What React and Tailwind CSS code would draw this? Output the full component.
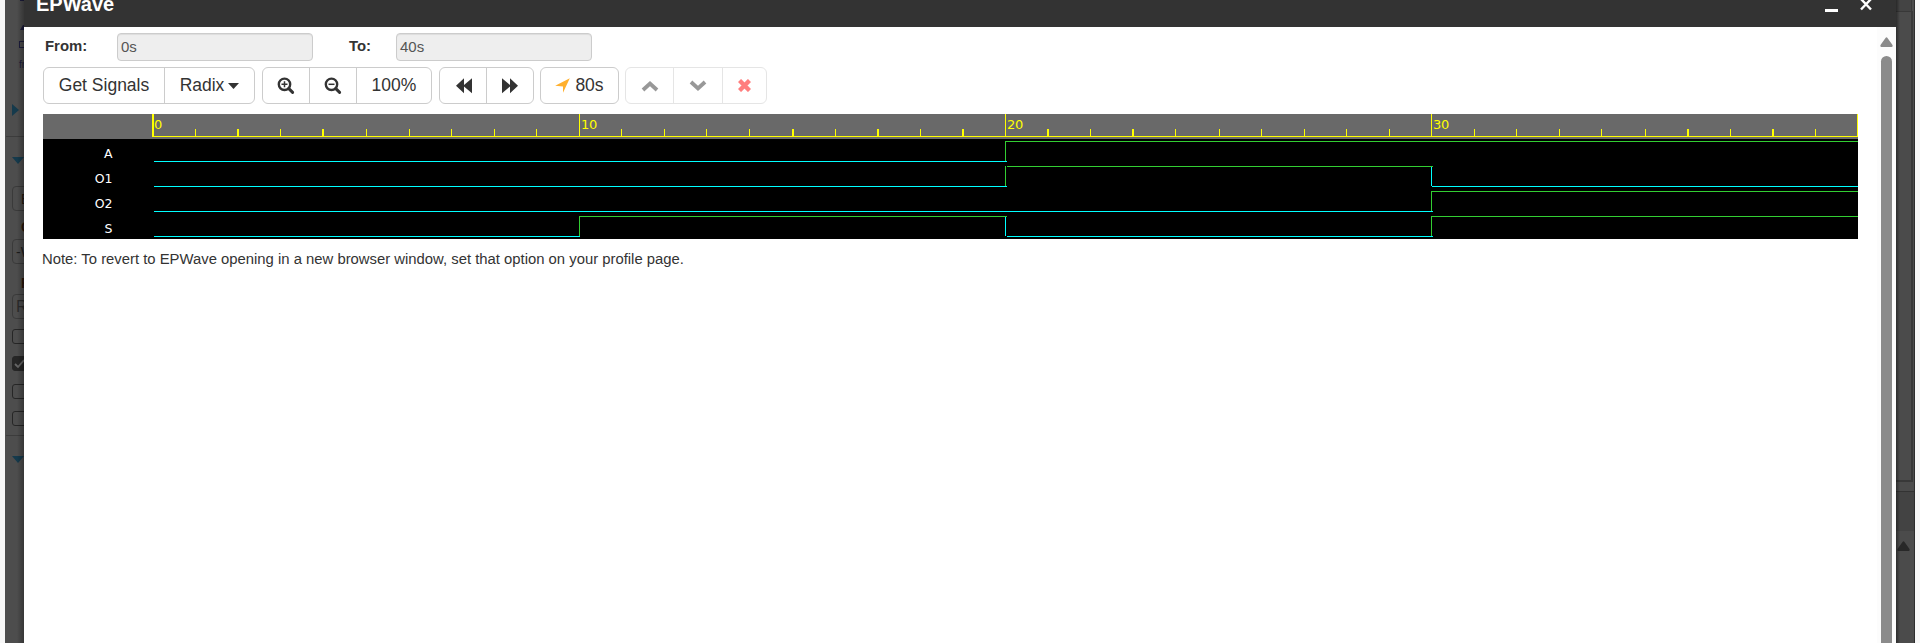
import React from 'react';

function Magnifier({ plus }) {
  return (
    <svg width="18" height="18" viewBox="0 0 18 18" fill="none" stroke="#333">
      <circle cx="7.500" cy="7.300" r="5.700" strokeWidth="2.400" />
      <path d="M11.800 11.600L15.600 15.400" strokeWidth="3" strokeLinecap="round" />
      <path d={plus ? 'M4.500 7.300H10.500M7.500 4.300V10.300' : 'M4.500 7.300H10.500'} strokeWidth="1.500" />
    </svg>
  );
}

const btn = 'flex h-full items-center justify-center border-r border-[#ccc] last:border-r-0';

function Group({ className = '', children }) {
  return <div className={'flex h-[37px] shrink-0 rounded-[6px] border border-[#ccc] bg-white ' + className}>{children}</div>;
}

function Field({ value }) {
  return (
    <div className="flex h-7 w-[196px] items-center rounded-[4px] border border-[#ccc] bg-[#eee] pl-[3px] text-[15px] text-[#555] shadow-[inset_0_1px_1px_rgba(0,0,0,0.075)]">
      {value}
    </div>
  );
}

// Ruler ticks as [x, width]; every tenth one is drawn separately as a major line.
const MINOR = [
  [152, 1], [194, 2], [237, 1], [279, 2], [323, 1], [366, 1], [408, 1], [451, 1], [493, 1],
  [578, 1], [621, 1], [663, 1], [706, 1], [749, 2], [792, 1], [834, 2], [877, 1], [919, 2],
  [1004, 2], [1047, 1], [1089, 2], [1132, 1], [1176, 1], [1218, 1], [1261, 1], [1303, 1], [1346, 1],
  [1431, 1], [1473, 1], [1516, 1], [1558, 1], [1602, 1], [1644, 2], [1687, 1], [1729, 2], [1772, 1],
];
const MAJOR = [
  ['0', 111], ['10', 538], ['20', 964], ['30', 1390],
];

function Wave() {
  const g = '#32cd32';
  const c = '#00ffff';
  return (
    <svg width="1815" height="125" className="mt-[10px] block shrink-0" shapeRendering="crispEdges">
      <rect width="1815" height="25" fill="#696969" />
      <rect y="25" width="1815" height="100" fill="#000" />
      <rect x="109" y="22" width="1706" height="1" fill="#ff0" />
      {MINOR.map(([x, w]) => (
        <rect key={x} x={x} y="15" width={w} height="7" fill="#ff0" />
      ))}
      <rect x="109" y="0" width="2" height="22" fill="#ff0" />
      {[536, 962, 1388, 1814].map((x) => (
        <rect key={x} x={x} y="0" width="1" height="22" fill="#ff0" />
      ))}
      <g fill="#ff0" fontFamily="DejaVu Sans, sans-serif" fontSize="13" letterSpacing="-0.2">
        {MAJOR.map(([m, x]) => (
          <text key={m} x={x} y="15">{m}</text>
        ))}
      </g>
      <g fill="#fff" fontFamily="DejaVu Sans, sans-serif" fontSize="12.500" textAnchor="end">
        {['A', 'O1', 'O2', 'S'].map((m, i) => (
          <text key={m} x="69.500" y={44 + i * 25}>{m}</text>
        ))}
      </g>
      <g fill="none" strokeWidth="1">
        <path stroke={c} d="M111 47.500H964M111 72.500H964M111 97.500H1390M111 122.500H537M962.500 102V122M964 122.500H1390M1388.500 52V72M1389 72.500H1815" />
        <path stroke={g} d="M962.500 47V27.500H1815M962.500 72V52M964 52.500H1390M1388.500 97V77.500H1815M536.500 122V102.500H964M1388.500 122V102.500H1815" />
      </g>
    </svg>
  );
}

function Check({ className, checked }) {
  return (
    <div className={'ml-[7px] h-[15px] w-[15px] shrink-0 rounded-[3px] border border-[#262626] ' + className + (checked ? ' bg-[#262626]' : '')}>
      {checked && (
        <svg width="13" height="13" viewBox="0 0 13 13" fill="none" stroke="#666" strokeWidth="1.800"><path d="M2 7l3 3 6-7" /></svg>
      )}
    </div>
  );
}

const box = 'ml-[7px] flex h-[25px] w-10 shrink-0 items-center rounded-[4px] border border-[#3a3a3a] ';

function LeftStrip() {
  return (
    <div className="relative flex w-[19px] shrink-0 flex-col overflow-hidden bg-[#4d4d4d] text-[14px] leading-none">
      <div className="ml-[15px] h-px w-1 shrink-0 bg-[#1c1c3c]" />
      <svg className="mt-6 ml-[15px] shrink-0" width="8" height="5"><path d="M0 5L3 0H8V5Z" fill="#1c1c3c" /></svg>
      <div className="mt-[11px] ml-[14px] h-[7px] w-[10px] shrink-0 border border-[#1c1c3c]" />
      <div className="mt-[12px] ml-[14px] h-[10px] shrink-0 text-[10px] text-[#1c1c3c]">fr</div>
      <svg className="mt-[34px] ml-[7px] shrink-0" width="7" height="12"><path d="M0 0L7 6L0 12Z" fill="#153a4c" /></svg>
      <div className="mt-5 ml-px h-px shrink-0 bg-[#3c3c3c]" />
      <svg className="mt-5 ml-[7px] shrink-0" width="12" height="7"><path d="M0 0H12L6 7Z" fill="#153a4c" /></svg>
      <div className={box + 'mt-[22px] pl-2 text-[#24170f]'}>E</div>
      <div className="mt-[9px] ml-4 h-[14px] shrink-0 font-bold text-[#2a170a]">C</div>
      <div className={box + 'mt-[5px] pl-[3px] text-[#1c1c1c]'}>-W</div>
      <div className="mt-[12px] ml-4 h-[14px] shrink-0 font-bold text-[#2a170a]">R</div>
      <div className={box + 'mt-[4px] pl-[3px] text-[16px] text-[#2b2b2b]'}>R</div>
      <Check className="mt-[10px]" />
      <Check className="mt-[12px]" checked />
      <Check className="mt-[13px]" />
      <Check className="mt-[12px]" />
      <div className="mt-[9px] ml-px h-px shrink-0 bg-[#3c3c3c]" />
      <svg className="mt-5 ml-[7px] shrink-0" width="12" height="7"><path d="M0 0H12L6 7Z" fill="#153a4c" /></svg>
      <div className="absolute inset-y-0 right-0 w-[7px] bg-gradient-to-r from-transparent to-black/30" />
    </div>
  );
}

function RightStrip() {
  return (
    <div className="relative flex w-[19px] shrink-0 flex-col bg-[#4b4b4b]">
      <div className="h-[11px] w-4 shrink-0 border-r border-[#383838] bg-[#444]" />
      <div className="h-[471px] w-[17px] shrink-0 border-t border-r-2 border-b-2 border-[#383838]" />
      <div className="mt-[9px] h-px shrink-0 bg-[#333]" />
      <div className="h-[39px] shrink-0 bg-[#434343]" />
      <svg className="mt-[10px] ml-px shrink-0" width="13" height="10"><path d="M5.500 1Q6.500 -.5 7.500 1L12.500 8Q13 10 11.500 10H1.500Q0 10 .5 8Z" fill="#282828" /></svg>
      <div className="absolute inset-y-0 right-0 w-px bg-[#2e2e2e]" />
      <div className="absolute inset-y-0 left-0 w-[4px] bg-gradient-to-l from-transparent to-black/40" />
    </div>
  );
}

export default function App() {
  return (
    <div className="flex h-[643px] w-[1920px] overflow-hidden bg-[#f7f7f7] font-['Liberation_Sans',Arial,sans-serif] text-[#333]">
      <div className="w-[5px] shrink-0" />
      <LeftStrip />
      <div className="flex w-[1872px] shrink-0 flex-col bg-white">
        <header className="flex h-[27px] shrink-0 items-start justify-between bg-[#333] pr-[24px] pl-[12px] text-white">
          <h1 className="-mt-[9px] text-[20px] leading-[26px] font-bold">EPWave</h1>
          <div className="flex gap-[22px]">
            <div className="mt-[9px] h-[3px] w-[13px] bg-white" />
            <svg width="12" height="11" viewBox="0 0 12 11" stroke="#fff" strokeWidth="2.400"><path d="M1 -1L11 9.500M11 -1L1 9.500" /></svg>
          </div>
        </header>
        <div className="flex min-h-0 flex-1 justify-between">
          <main className="flex flex-col pl-[19px]">
            <div className="mt-[6px] flex h-7 shrink-0 pl-[2px] text-[14.900px]">
              <div className="w-[72px] pt-[2px] font-bold">From:</div>
              <Field value="0s" />
              <div className="ml-[36px] w-[47px] pt-[2px] font-bold">To:</div>
              <Field value="40s" />
            </div>
            <div className="mt-[6px] flex shrink-0 text-[17.500px]">
              <Group>
                <div className={btn + ' w-[121px]'}>Get Signals</div>
                <div className={btn + ' w-[89px] gap-[4px]'}>
                  Radix
                  <svg width="11" height="6"><path d="M0 0H11L5.500 6Z" fill="#333" /></svg>
                </div>
              </Group>
              <Group className="ml-[7px]">
                <div className={btn + ' w-[47px]'}><Magnifier plus /></div>
                <div className={btn + ' w-[47px]'}><Magnifier /></div>
                <div className={btn + ' w-[74px]'}>100%</div>
              </Group>
              <Group className="ml-[7px]">
                <div className={btn + ' w-[47px]'}><svg className="ml-px" width="16" height="16" fill="#333"><path d="M0 7.800L8 .3V7L16 .3V15.300L8 8.600V15.300Z" /></svg></div>
                <div className={btn + ' w-[46px]'}><svg className="-ml-px" width="16" height="16" fill="#333"><path d="M16 7.800L8 .3V7L0 .3V15.300L8 8.600V15.300Z" /></svg></div>
              </Group>
              <Group className="ml-[6px]">
                <div className={btn + ' w-[77px] gap-[5px]'}>
                  <svg width="15" height="15" fill="#ffb02e"><path d="M14.800 .2L8 14.800V8.500L.2 7.800Z" /></svg>
                  80s
                </div>
              </Group>
              <Group className="ml-[6px] opacity-50">
                <div className={btn + ' w-[48px]'}><svg width="18" height="12" fill="none" stroke="#333" strokeWidth="3.800"><path d="M2 10L9 3.500L16 10" /></svg></div>
                <div className={btn + ' w-[49px]'}><svg width="18" height="12" fill="none" stroke="#333" strokeWidth="3.800"><path d="M2 2L9 8.500L16 2" /></svg></div>
                <div className={btn + ' w-[43px]'}><svg width="13" height="13" stroke="#f00" strokeWidth="4.400"><path d="M1.500 1.500L11.500 11.500M11.500 1.500L1.500 11.500" /></svg></div>
              </Group>
            </div>
            <Wave />
            <p className="-ml-px mt-[9px] text-[14.850px] leading-[22px]">Note: To revert to EPWave opening in a new browser window, set that option on your profile page.</p>
          </main>
          <div className="flex w-[19px] flex-col items-center bg-[#fcfcfc] pt-[10px]">
            <svg width="13" height="10"><path d="M5.500 1Q6.500 -.5 7.500 1L12.500 8Q13 10 11.500 10H1.500Q0 10 .5 8Z" fill="#8b8b8b" /></svg>
            <div className="mt-[9px] w-[11px] flex-1 rounded-t-full bg-[#8b8b8b]" />
          </div>
        </div>
      </div>
      <RightStrip />
    </div>
  );
}
